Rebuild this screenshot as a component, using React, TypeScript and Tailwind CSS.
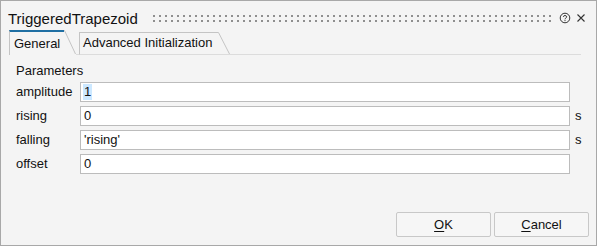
const font = { fontFamily: '"Liberation Sans", Arial, sans-serif' };

function Slant({ h, bottom }: { h: number; bottom: boolean }) {
  return (
    <svg width="12" height={h} viewBox={`0 0 12 ${h}`} className="block shrink-0">
      <line x1="0" y1="0.5" x2="0.5" y2="0.5" stroke="#c4c4c4" />
      <line x1="0.5" y1="0.5" x2="11.5" y2={h - 1} stroke="#c4c4c4" />
      {bottom && <line x1="0" y1={h - 0.5} x2="12" y2={h - 0.5} stroke="#dcdcdc" />}
    </svg>
  );
}

function Grip() {
  return (
    <svg className="block h-[10px] flex-1" height="10">
      <defs>
        <pattern id="dots" width="6" height="5" patternUnits="userSpaceOnUse">
          <rect x="1" y="1" width="2" height="2" fill="#8f8f8f" />
        </pattern>
      </defs>
      <rect width="100%" height="10" fill="url(#dots)" />
    </svg>
  );
}

const rows = [
  { label: "amplitude", value: "1", unit: "", selected: true },
  { label: "rising", value: "0", unit: "s" },
  { label: "falling", value: "'rising'", unit: "s" },
  { label: "offset", value: "0", unit: "" },
];

export default function App() {
  return (
    <div
      style={font}
      className="flex h-[246px] w-[597px] flex-col border border-[#a8a8a8] bg-[#f4f4f4] text-[13px] text-[#111]"
    >
      {/* title bar */}
      <div className="mt-[6px] flex h-[22px] items-center pl-[7px] pr-[10px]">
        <span className="text-[15px] leading-none">TriggeredTrapezoid</span>
        <div className="ml-[14px] mt-[1px] flex flex-1">
          <Grip />
        </div>
        <svg width="12" height="12" viewBox="0 0 12 12" className="ml-[5px]">
          <circle cx="6" cy="6" r="4.8" fill="none" stroke="#333" strokeWidth="1" />
          <path d="M4.3 4.8 C4.3 3.1 7.7 3.1 7.7 4.8 C7.7 6 6 6 6 7.3" fill="none" stroke="#333" strokeWidth="1" />
          <rect x="5.5" y="8.1" width="1" height="1" fill="#333" />
        </svg>
        <svg width="10" height="10" viewBox="0 0 10 10" className="ml-[5px]">
          <path d="M1.5 1.5 L8.5 8.5 M8.5 1.5 L1.5 8.5" stroke="#333" strokeWidth="1.1" />
        </svg>
      </div>

      {/* tabs */}
      <div className="mt-[1px] flex h-[25px] items-end pl-[8px] pr-[15px]">
        <div className="flex h-[25px]">
          <div className="w-[55px] border-l border-t-2 border-l-[#c4c4c4] border-t-[#1f6fa3] pl-[4px] pt-[4px] leading-[16px]">
            General
          </div>
          <Slant h={25} bottom={false} />
        </div>
        <div className="h-[25px] w-[3px] border-b border-[#dcdcdc]" />
        <div className="flex h-[23px]">
          <div className="w-[139px] border-b border-l border-t border-b-[#dcdcdc] border-l-[#c4c4c4] border-t-[#c4c4c4] pl-[3px] pt-[2px] leading-[16px]">
            Advanced Initialization
          </div>
          <Slant h={23} bottom={true} />
        </div>
        <div className="h-[25px] flex-1 border-b border-[#dcdcdc]" />
      </div>

      {/* content */}
      <div className="pl-[15px]">
        <div className="mt-[8px] h-[16px] leading-[16px]">Parameters</div>
        <div className="mt-[3px] flex flex-col gap-[4px]">
          {rows.map((r) => (
            <div key={r.label} className="flex h-[20px] items-center">
              <div className="w-[64px] leading-[16px]">{r.label}</div>
              <div className="flex h-[20px] w-[490px] items-center border border-[#bcbcbc] bg-white pl-[2px]">
                <span className={r.selected ? "bg-[#cce8ff] px-[1px] leading-[16px]" : "px-[1px] leading-[16px]"}>
                  {r.value}
                </span>
              </div>
              <div className="ml-[5px] leading-[16px]">{r.unit}</div>
            </div>
          ))}
        </div>
      </div>

      {/* buttons */}
      <div className="mt-auto flex justify-end gap-[3px] pb-[8px] pr-[7px]">
        <button className="h-[25px] w-[95px] rounded-[2px] border border-[#c8c8c8] bg-[#f6f6f6] leading-[16px]">
          <span className="underline underline-offset-2">O</span>K
        </button>
        <button className="h-[25px] w-[95px] rounded-[2px] border border-[#c8c8c8] bg-[#f6f6f6] leading-[16px]">
          <span className="underline underline-offset-2">C</span>ancel
        </button>
      </div>
    </div>
  );
}
